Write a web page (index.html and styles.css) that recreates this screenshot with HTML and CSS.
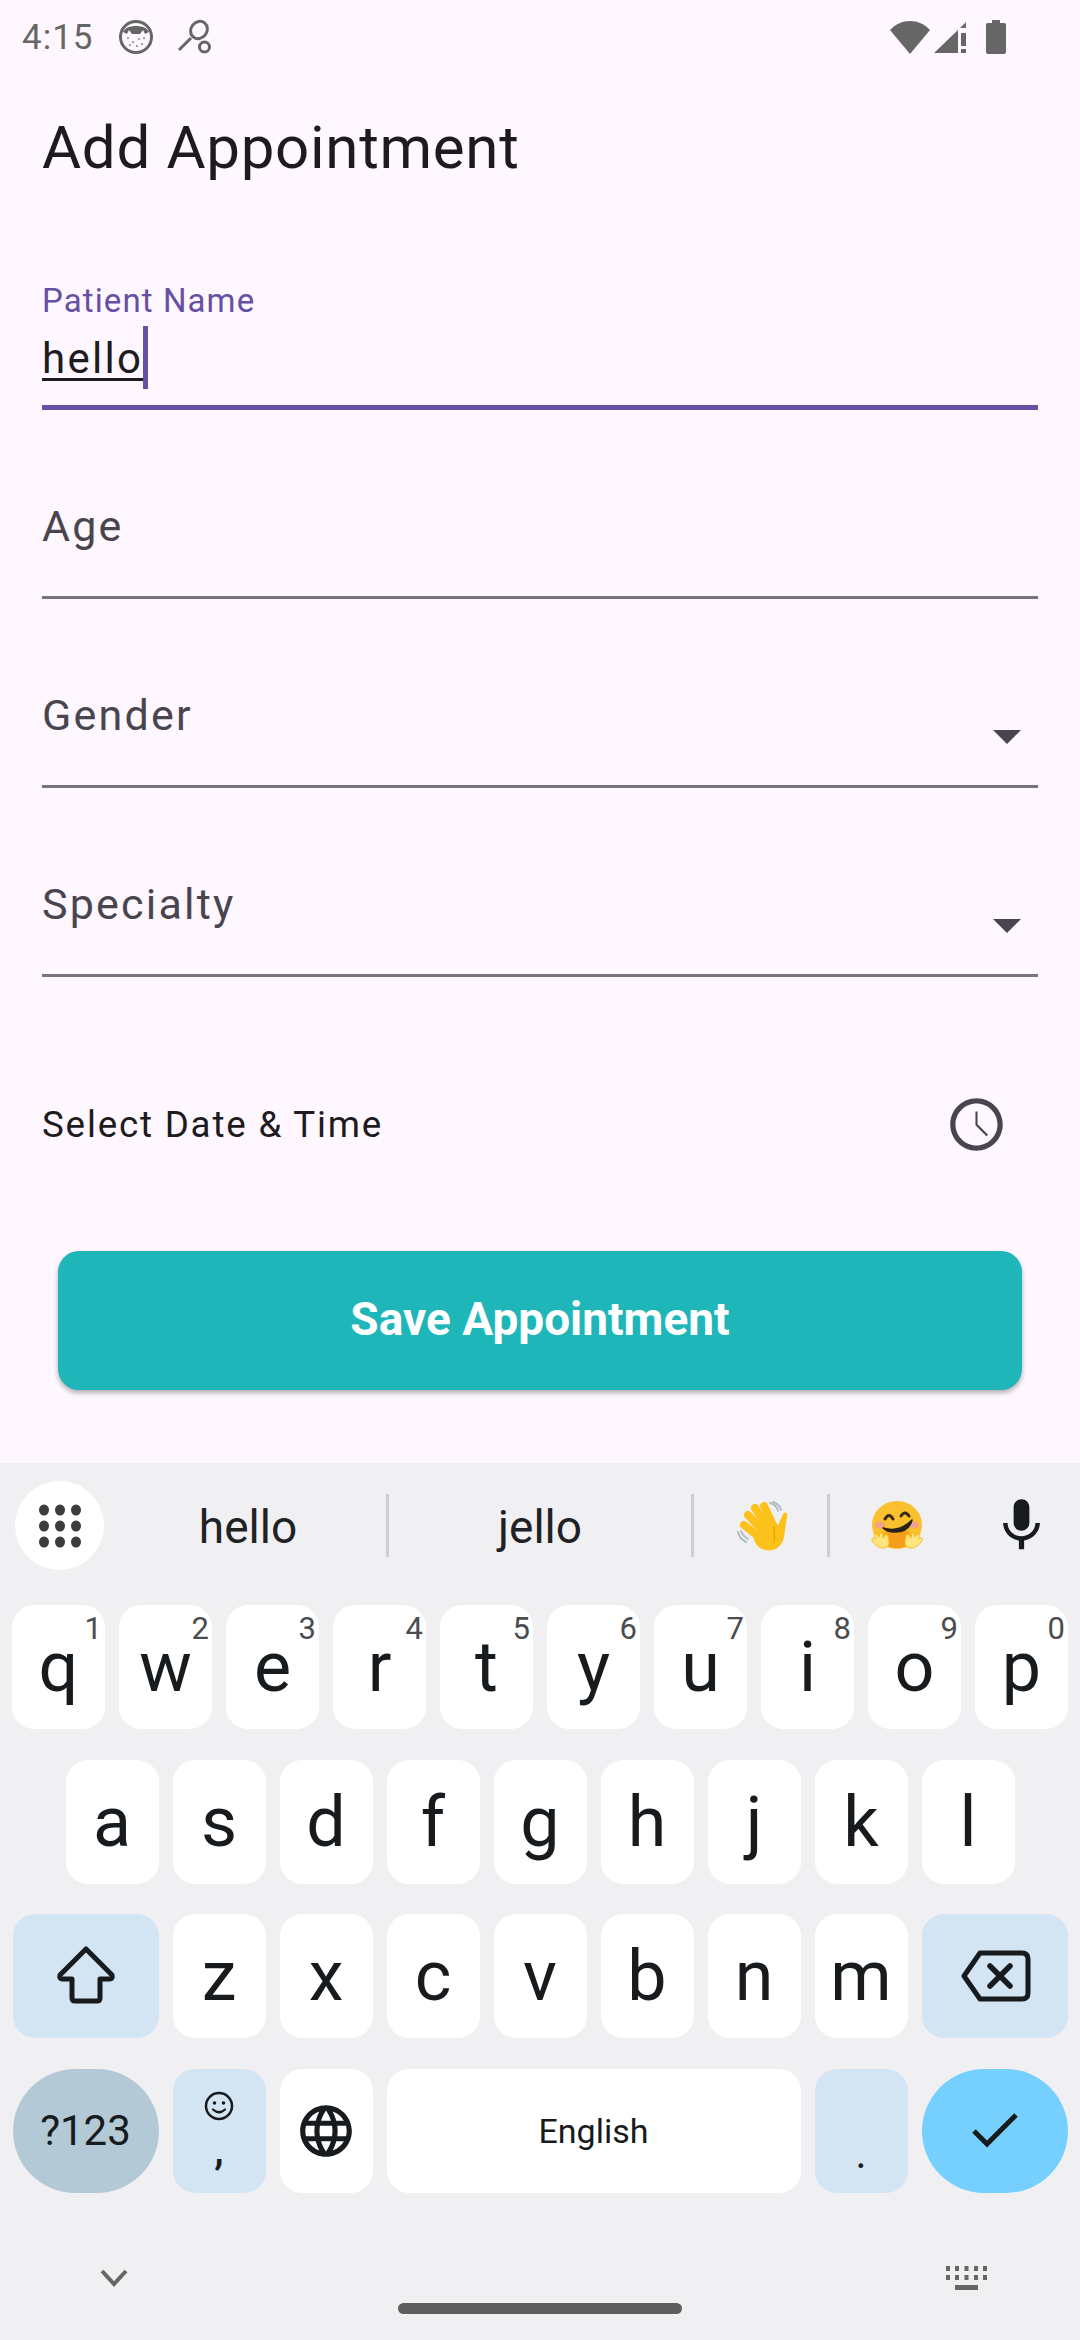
FILE: index.html
```html
<!doctype html>
<html>
	<head>
		<title>Add Appointment</title>
		<link rel="stylesheet" href="styles.css">
	</head>
	<body>

		<div class="status-bar">
			<span class="status-time">4:15</span>
			<svg class="status-face" width="36" height="36" viewBox="0 0 36 36">
				<circle cx="18" cy="18" r="15.5" fill="none" stroke="#666" stroke-width="3"/>
				<path d="M5 13 C8 5 28 5 31 13 L27 15 L25 11 L22 15 L14 15 L11 11 L9 15 Z" fill="#666"/>
				<g fill="#888">
					<circle cx="10" cy="19" r="1"/><circle cx="15" cy="23" r="1"/><circle cx="21" cy="20" r="1"/>
					<circle cx="26" cy="19" r="1"/><circle cx="12" cy="26" r="1"/><circle cx="19" cy="27" r="1"/>
					<circle cx="24" cy="25" r="1"/>
				</g>
			</svg>
			<svg class="status-key" width="36" height="36" viewBox="0 0 36 36">
				<g fill="none" stroke="#666" stroke-width="3">
					<ellipse cx="22" cy="11" rx="8" ry="9" transform="rotate(38 22 11)"/>
					<path d="M14 19 L2 31"/>
					<circle cx="27.500" cy="28" r="5"/>
				</g>
			</svg>
			<div class="status-right">
				<svg width="40" height="33" viewBox="0 0 40 33"><path d="M0 9 C11 -3 29 -3 40 9 L20 33 Z" fill="#666"/></svg>
				<svg class="status-signal" width="33" height="33" viewBox="0 0 33 33">
					<path d="M0 32 L24 9 L24 32 Z M26 7 L32 1 L32 7 Z M27 12 L32 12 L32 25 L27 25 Z M27 28 L32 28 L32 32 L27 32 Z" fill="#666"/>
				</svg>
				<svg class="status-battery" width="20" height="34" viewBox="0 0 20 34">
					<path d="M6 0 H14 V3 H18 Q20 3 20 5 V32 Q20 34 18 34 H2 Q0 34 0 32 V5 Q0 3 2 3 H6 Z" fill="#666"/>
				</svg>
			</div>
		</div>

		<div class="form">
			<h1 class="page-title">Add Appointment</h1>

			<div class="field field-focused">
				<div class="field-label-small">Patient Name</div>
				<div class="field-value"><span class="composing">hello</span><span class="caret"></span></div>
			</div>

			<div class="field">
				<div class="field-label">Age</div>
			</div>

			<div class="field">
				<div class="field-label">Gender</div>
				<div class="dropdown-arrow"></div>
			</div>

			<div class="field">
				<div class="field-label">Specialty</div>
				<div class="dropdown-arrow"></div>
			</div>

			<div class="date-row">
				<span>Select Date &amp; Time</span>
				<svg width="63" height="63" viewBox="0 0 24 24">
					<path fill="#49454f" d="M11.99 2C6.47 2 2 6.48 2 12s4.47 10 9.990 10C17.520 22 22 17.520 22 12S17.520 2 11.990 2zM12 20c-4.420 0-8-3.580-8-8s3.580-8 8-8 8 3.580 8 8-3.580 8-8 8zm.4-13h-.8v5.300l4.200 4.200.6-.6-4-4z"/>
				</svg>
			</div>

			<div class="save-btn">Save Appointment</div>
		</div>

		<div class="keyboard">
			<div class="suggestions">
				<div class="apps-cell">
					<div class="apps-btn">
						<svg width="44" height="44" viewBox="0 0 44 44" fill="#3c3c3c">
							<ellipse cx="6" cy="6" rx="5" ry="5.500"/><ellipse cx="22" cy="6" rx="5" ry="5.500"/><ellipse cx="38" cy="6" rx="5" ry="5.500"/>
							<ellipse cx="6" cy="22" rx="5" ry="5.500"/><ellipse cx="22" cy="22" rx="5" ry="5.500"/><ellipse cx="38" cy="22" rx="5" ry="5.500"/>
							<ellipse cx="6" cy="38" rx="5" ry="5.500"/><ellipse cx="22" cy="38" rx="5" ry="5.500"/><ellipse cx="38" cy="38" rx="5" ry="5.500"/>
						</svg>
					</div>
				</div>
				<div class="suggestion suggestion-hello">hello</div>
				<div class="divider"></div>
				<div class="suggestion suggestion-jello">jello</div>
				<div class="divider"></div>
				<div class="suggestion suggestion-emoji">
					<svg width="51" height="50" viewBox="0 0 51 50">
						<g fill="none" stroke="#b0bec5" stroke-width="2" stroke-linecap="round">
							<path d="M33 2 C37 3 40 6 41 10"/>
							<path d="M36 1 C39 2 43 5 44 9"/>
							<path d="M1 31 C2 35 5 39 9 41"/>
							<path d="M4 30 C5 33 8 36 11 38"/>
						</g>
						<g fill="none" stroke="#fcc21b" stroke-width="8" stroke-linecap="round">
							<path d="M27 5 L36 24"/>
							<path d="M18 7 L30 26"/>
							<path d="M11 14 L26 30"/>
							<path d="M7 24 L22 36"/>
						</g>
						<path d="M36 20 L41 24 L46 13 C48 10 51 12 50 16 L47 36 C45 46 37 51 28 49 C20 47 16 40 17 34 L24 22 Z" fill="#fcc21b"/>
						<path d="M37 25 C36 30 39 34 37 42" fill="none" stroke="#eda600" stroke-width="1.500"/>
					</svg>
				</div>
				<div class="divider"></div>
				<div class="suggestion suggestion-hug">
					<svg width="52" height="50" viewBox="0 0 52 50">
						<ellipse cx="26" cy="24" rx="25" ry="24" fill="#fbc02d"/>
						<path d="M12 42 Q26 52 40 42 L38 30 L14 30 Z" fill="#f59e1b"/>
						<ellipse cx="9" cy="24" rx="5" ry="3.500" fill="#f4a08a"/>
						<ellipse cx="43" cy="24" rx="5" ry="3.500" fill="#f4a08a"/>
						<g fill="none" stroke="#3b2a14" stroke-width="3" stroke-linecap="round">
							<path d="M14 18 Q18 11 22 18"/>
							<path d="M30 15 Q34 9 38 15"/>
						</g>
						<path d="M12 27 Q28 32 41 19 Q38 31 24 31 Q16 31 12 27 Z" fill="#2b2118" stroke="#2b2118" stroke-width="1.500" stroke-linejoin="round"/>
						<g fill="#ffe57f" stroke="#f5b400" stroke-width=".8">
							<path d="M2 41 C-1 37 2 36 5 38 L3 34 C4 32 6 33 8 36 L9 32 C11 31 12 34 12 37 L15 33 C17 33 18 38 18 42 C18 48 8 50 2 41 Z"/>
							<path d="M50 41 C53 37 50 36 47 38 L49 34 C48 32 46 33 44 36 L43 32 C41 31 40 34 40 37 L37 33 C35 33 34 38 34 42 C34 48 44 50 50 41 Z"/>
						</g>
					</svg>
				</div>
				<div class="mic-cell">
					<svg width="63" height="63" viewBox="0 0 24 24">
						<path fill="#171b1e" d="M12 14c1.660 0 3-1.340 3-3V5c0-1.660-1.340-3-3-3S9 3.340 9 5v6c0 1.660 1.340 3 3 3zm5.300-3c0 3-2.540 5.100-5.300 5.100S6.700 14 6.700 11H5c0 3.410 2.720 6.230 6 6.720V21h2v-3.280c3.280-.48 6-3.300 6-6.720h-1.700z"/>
					</svg>
				</div>
			</div>

			<div class="keys">
				<div class="key-row">
					<div class="key">q<span class="hint">1</span></div>
					<div class="key">w<span class="hint">2</span></div>
					<div class="key">e<span class="hint">3</span></div>
					<div class="key">r<span class="hint">4</span></div>
					<div class="key">t<span class="hint">5</span></div>
					<div class="key">y<span class="hint">6</span></div>
					<div class="key">u<span class="hint">7</span></div>
					<div class="key">i<span class="hint">8</span></div>
					<div class="key">o<span class="hint">9</span></div>
					<div class="key">p<span class="hint">0</span></div>
				</div>
				<div class="key-row key-row-home">
					<div class="key">a</div>
					<div class="key">s</div>
					<div class="key">d</div>
					<div class="key">f</div>
					<div class="key">g</div>
					<div class="key">h</div>
					<div class="key">j</div>
					<div class="key">k</div>
					<div class="key">l</div>
				</div>
				<div class="key-row">
					<div class="key key-wide key-fn">
						<svg width="66" height="66" viewBox="0 0 66 66">
							<path d="M33 6 L59 32 Q60 36 57 36 H47 V55 Q47 58 44 58 H22 Q19 58 19 55 V36 H9 Q6 36 7 32 Z" fill="none" stroke="#171b1e" stroke-width="5" stroke-linejoin="round"/>
						</svg>
					</div>
					<div class="key">z</div>
					<div class="key">x</div>
					<div class="key">c</div>
					<div class="key">v</div>
					<div class="key">b</div>
					<div class="key">n</div>
					<div class="key">m</div>
					<div class="key key-wide key-fn">
						<svg width="72" height="56" viewBox="0 0 72 56">
							<path d="M21 5 H63 Q69 5 69 11 V45 Q69 51 63 51 H21 L5 28 Z" fill="none" stroke="#171b1e" stroke-width="5" stroke-linejoin="round"/>
							<path d="M31 18 L51 38 M51 18 L31 38" fill="none" stroke="#171b1e" stroke-width="5.500" stroke-linecap="round"/>
						</svg>
					</div>
				</div>
				<div class="key-row">
					<div class="key key-wide key-symbols">?123</div>
					<div class="key key-fn key-comma">
						<svg class="key-smile" width="30" height="30" viewBox="0 0 30 30">
							<circle cx="15" cy="15" r="13" fill="none" stroke="#171b1e" stroke-width="2.500"/>
							<circle cx="10.500" cy="12" r="1.800" fill="#171b1e"/>
							<circle cx="19.500" cy="12" r="1.800" fill="#171b1e"/>
							<path d="M9 18.500 Q15 24 21 18.500" fill="none" stroke="#171b1e" stroke-width="2.200" stroke-linecap="round"/>
						</svg>
						<span class="comma-mark">,</span>
					</div>
					<div class="key">
						<svg width="62" height="62" viewBox="0 0 24 24">
							<path fill="#171b1e" d="M11.990 2C6.470 2 2 6.480 2 12s4.470 10 9.990 10C17.520 22 22 17.520 22 12S17.520 2 11.990 2zm6.930 6h-2.950c-.32-1.250-.78-2.450-1.380-3.560 1.840.63 3.370 1.910 4.330 3.560zM12 4.040c.83 1.200 1.480 2.530 1.910 3.960h-3.820c.43-1.430 1.080-2.760 1.910-3.960zM4.260 14C4.100 13.360 4 12.690 4 12s.1-1.360.26-2h3.380c-.08.66-.14 1.320-.14 2 0 .68.06 1.340.14 2H4.260zm.82 2h2.950c.32 1.250.78 2.450 1.380 3.560-1.840-.63-3.370-1.900-4.330-3.560zm2.950-8H5.080c.96-1.660 2.490-2.930 4.330-3.560C8.810 5.550 8.350 6.750 8.030 8zM12 19.960c-.83-1.200-1.480-2.530-1.910-3.960h3.820c-.43 1.430-1.080 2.760-1.910 3.960zM14.340 14H9.660c-.09-.66-.16-1.320-.16-2 0-.68.07-1.350.16-2h4.680c.09.65.16 1.320.16 2 0 .68-.07 1.340-.16 2zm.25 5.560c.6-1.110 1.060-2.310 1.380-3.560h2.950c-.96 1.650-2.490 2.930-4.330 3.560zM16.360 14c.08-.66.14-1.320.14-2 0-.68-.06-1.340-.14-2h3.380c.16.64.26 1.310.26 2s-.1 1.360-.26 2h-3.380z"/>
						</svg>
					</div>
					<div class="key key-space">English</div>
					<div class="key key-fn key-period">.</div>
					<div class="key key-wide key-enter">
						<svg width="48" height="38" viewBox="0 0 48 38">
							<path d="M3 19 L16 32 L45 3" fill="none" stroke="#171b1e" stroke-width="5"/>
						</svg>
					</div>
				</div>
			</div>

			<div class="kb-nav">
				<svg width="28" height="18" viewBox="0 0 28 18">
					<path d="M2 2 L14 15 L26 2" fill="none" stroke="#666" stroke-width="4"/>
				</svg>
				<svg width="42" height="24" viewBox="0 0 42 24" fill="#666">
					<rect x="0" y="0" width="4" height="5"/><rect x="9" y="0" width="4" height="5"/><rect x="18.500" y="0" width="4" height="5"/><rect x="28" y="0" width="4" height="5"/><rect x="37" y="0" width="4" height="5"/>
					<rect x="0" y="9" width="4" height="5"/><rect x="9" y="9" width="4" height="5"/><rect x="18.500" y="9" width="4" height="5"/><rect x="28" y="9" width="4" height="5"/><rect x="37" y="9" width="4" height="5"/>
					<rect x="9" y="19" width="23" height="5"/>
				</svg>
			</div>
			<div class="home-pill"></div>
		</div>

	</body>
</html>
```

FILE: styles.css
```css
body {
	margin: 0;
	width: 1080px;
	height: 2340px;
	overflow: hidden;
	background: #fef7ff;
	font-family: Roboto, sans-serif;
	color: #1d1b20;
	display: flex;
	flex-direction: column;
}

/* STATUS BAR */
.status-bar {
	height: 72px;
	padding: 2px 0 0 22px;
	box-sizing: border-box;
	display: flex;
	align-items: center;
}

.status-time {
	font-size: 35px;
	letter-spacing: 1px;
	color: #666666;
}

.status-face {
	margin-left: 24px;
}

.status-key {
	margin-left: 23px;
}

.status-right {
	margin-left: auto;
	margin-right: 74px;
	display: flex;
	align-items: center;
}

.status-signal {
	margin-left: 4px;
}

.status-battery {
	margin-left: 19px;
}

/* FORM */
.form {
	flex: 1;
	padding: 0 42px;
	display: flex;
	flex-direction: column;
}

.page-title {
	font-size: 60px;
	font-weight: 400;
	letter-spacing: .7px;
	line-height: 76px;
	margin: 38px 0 0 0;
	height: 172px;
}

.field {
	height: 189px;
	box-sizing: border-box;
	border-bottom: 3px solid #79747e;
	position: relative;
}

.field-focused {
	height: 128px;
	border-bottom: 5px solid #6750a4;
}

.field-label-small {
	font-size: 33px;
	letter-spacing: 1.100px;
	line-height: 38px;
	color: #6750a4;
}

.field-value {
	font-size: 42px;
	letter-spacing: 2.300px;
	height: 63px;
	margin-top: 6px;
	display: flex;
	align-items: flex-end;
}

.composing {
	border-bottom: 3px solid #1d1b20;
	line-height: 39px;
	margin-bottom: 8px;
}

.caret {
	width: 5px;
	height: 63px;
	background: #6750a4;
}

.field-label {
	font-size: 43px;
	letter-spacing: 2.200px;
	line-height: 52px;
	color: #49454f;
	padding-top: 90px;
}

.dropdown-arrow {
	position: absolute;
	right: 17px;
	top: 131px;
	width: 0;
	height: 0;
	border-left: 14px solid transparent;
	border-right: 14px solid transparent;
	border-top: 14px solid #49454f;
}

.date-row {
	height: 128px;
	margin-top: 83px;
	padding-right: 30px;
	display: flex;
	align-items: center;
	justify-content: space-between;
	font-size: 36.750px;
	letter-spacing: 1.800px;
}

.save-btn {
	margin: 63px 16px 0 16px;
	height: 139px;
	box-sizing: border-box;
	padding-bottom: 3px;
	border-radius: 21px;
	background: #1eb6b9;
	color: #ffffff;
	font-size: 46px;
	font-weight: 700;
	display: flex;
	align-items: center;
	justify-content: center;
	box-shadow: 0 3px 5px rgba(0, 0, 0, 0.3);
}

/* KEYBOARD */
.keyboard {
	height: 877px;
	background: #f0f0f3;
	flex-shrink: 0;
}

.suggestions {
	height: 89px;
	padding-top: 18px;
	display: flex;
	align-items: center;
}

.apps-cell {
	width: 110px;
	padding-left: 15px;
	box-sizing: border-box;
}

.apps-btn {
	width: 89px;
	height: 89px;
	border-radius: 50%;
	background: #ffffff;
	display: flex;
	align-items: center;
	justify-content: center;
}

.suggestion {
	display: flex;
	align-items: center;
	justify-content: center;
	font-size: 46px;
	color: #1f2124;
	padding-top: 3px;
}

.suggestion-hello {
	width: 276px;
}

.suggestion-jello {
	width: 302px;
}

.suggestion-emoji {
	width: 130px;
	padding-top: 0;
	padding-left: 3px;
}

.suggestion-hug {
	width: 134px;
	padding-top: 0;
}

.divider {
	width: 3px;
	height: 63px;
	background: #ccced2;
}

.mic-cell {
	width: 114px;
	display: flex;
	justify-content: center;
}

.keys {
	margin-top: 35px;
	padding: 0 12px;
	display: flex;
	flex-direction: column;
	gap: 30.670px;
}

.key-row {
	display: flex;
	gap: 14px;
	justify-content: center;
}

.key {
	width: 93px;
	height: 124px;
	border-radius: 22px;
	background: #ffffff;
	position: relative;
	display: flex;
	align-items: center;
	justify-content: center;
	font-size: 70px;
	color: #171b1e;
}

.hint {
	position: absolute;
	top: 6px;
	right: 3px;
	font-size: 31px;
	line-height: 36px;
	color: #4a4c4e;
}

.key-wide {
	width: 146px;
}

.key-fn {
	background: #d3e4f3;
}

.key-symbols {
	background: #b3c9d6;
	border-radius: 62px;
	font-size: 42px;
}

.key-comma {
	flex-direction: column;
	justify-content: flex-start;
}

.key-smile {
	margin-top: 22px;
}

.comma-mark {
	font-size: 42px;
	line-height: 42px;
	font-weight: 500;
	margin-top: 8px;
}

.key-period {
	font-size: 42px;
	padding-top: 46px;
	height: 78px;
}

.key-space {
	width: 414px;
	font-size: 34px;
}

.key-enter {
	background: #76d0ff;
	border-radius: 62px;
}

.kb-nav {
	margin-top: 73px;
	height: 24px;
	padding: 0 92px 0 100px;
	display: flex;
	align-items: center;
	justify-content: space-between;
}

.home-pill {
	width: 284px;
	height: 11px;
	border-radius: 6px;
	background: #5f5f5f;
	margin: 13px auto 0 auto;
}
```
